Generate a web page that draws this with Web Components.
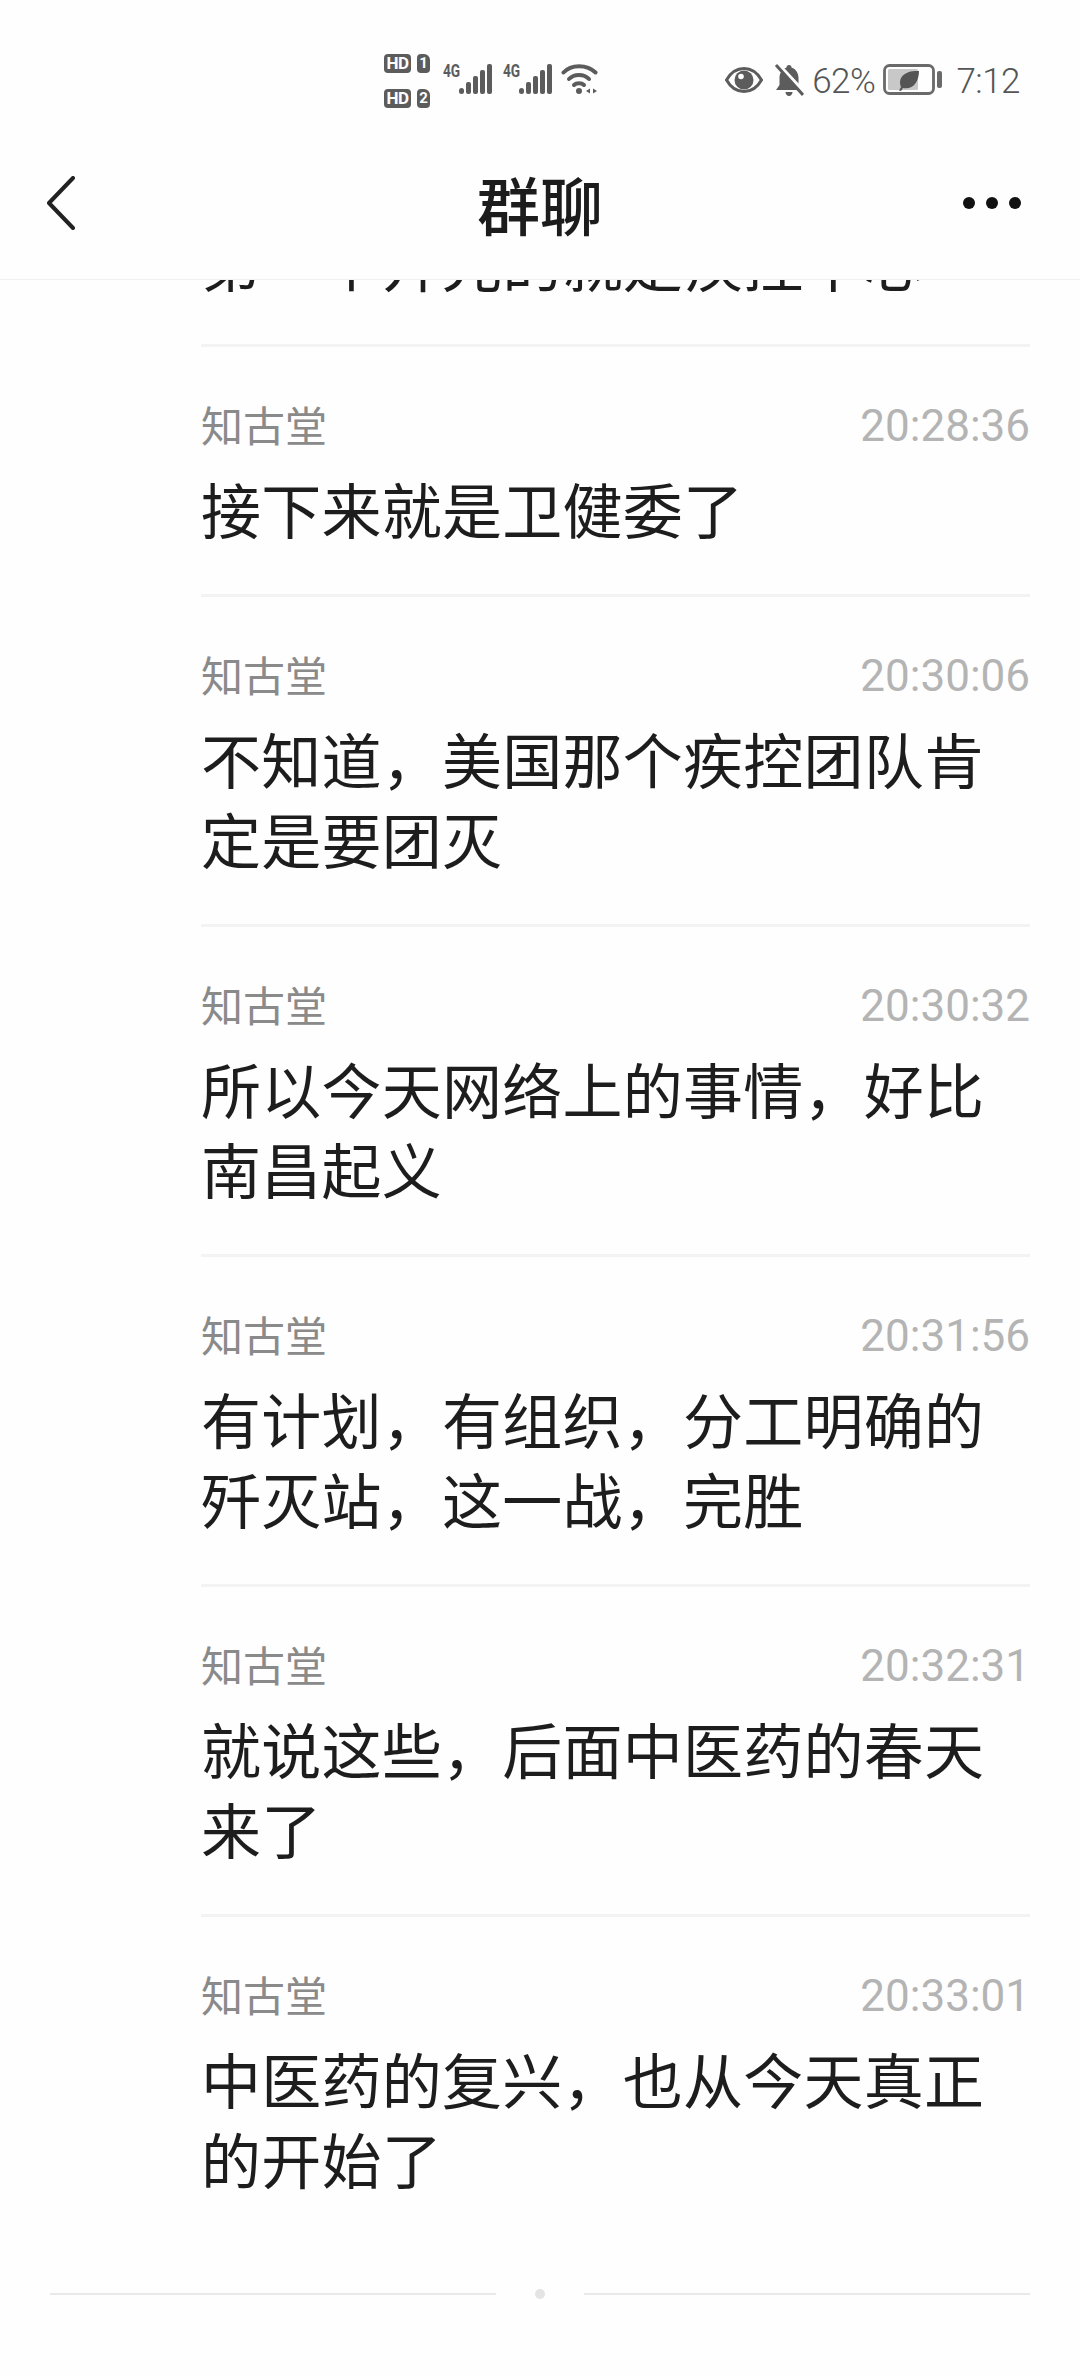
<!DOCTYPE html>
<html lang="zh-CN">
<head>
<meta charset="utf-8">
<title>群聊</title>
<style>
  html, body { margin: 0; padding: 0; background: #fefefe; }
  body { font-family: "Noto Sans CJK SC", "Noto Sans", sans-serif; }
</style>
</head>
<body>
<chat-page>
  <status-bar slot="top"></status-bar>
  <title-bar slot="top" title="群聊"></title-bar>
  <chat-row clipped>第一个开光的就是疾控中心</chat-row>
  <chat-row name="知古堂" time="20:28:36">接下来就是卫健委了</chat-row>
  <chat-row name="知古堂" time="20:30:06">不知道，美国那个疾控团队肯定是要团灭</chat-row>
  <chat-row name="知古堂" time="20:30:32">所以今天网络上的事情，好比南昌起义</chat-row>
  <chat-row name="知古堂" time="20:31:56">有计划，有组织，分工明确的歼灭站，这一战，完胜</chat-row>
  <chat-row name="知古堂" time="20:32:31">就说这些，后面中医药的春天来了</chat-row>
  <chat-row name="知古堂" time="20:33:01" last>中医药的复兴，也从今天真正的开始了</chat-row>
  <end-mark slot="bottom"></end-mark>
</chat-page>

<script>
class ChatPage extends HTMLElement {
  constructor() {
    super();
    this.attachShadow({ mode: 'open' });
    this.shadowRoot.innerHTML = `
      <style>
        :host { display: flex; flex-direction: column; width: 1080px; height: 2376px; overflow: hidden; background: #fefefe; }
        header { flex: none; background: #fefefe; border-bottom: 1px solid #f1f1f1; }
        main { flex: none; height: 2009px; overflow: hidden; display: flex; flex-direction: column; }
        footer { flex: none; }
      </style>
      <header><slot name="top"></slot></header>
      <main><slot></slot></main>
      <footer><slot name="bottom"></slot></footer>
    `;
  }
}

class StatusBar extends HTMLElement {
  constructor() {
    super();
    this.attachShadow({ mode: 'open' });
    const signal = `
      <span class="net"><b>4G</b>
        <svg width="33" height="31" viewBox="0 0 33 31" fill="#5c5c5c">
          <rect x="0" y="25" width="5" height="6" rx="2.5"/>
          <rect x="7" y="19" width="5" height="12" rx="2"/>
          <rect x="14" y="13" width="5" height="18" rx="2"/>
          <rect x="21" y="7" width="5" height="24" rx="2"/>
          <rect x="28" y="1" width="5" height="30" rx="2"/>
        </svg>
      </span>`;
    this.shadowRoot.innerHTML = `
      <style>
        :host { display: flex; height: 134px; box-sizing: border-box; padding: 53px 60px 0 384px; color: #5f5f5f; font-family: Roboto, "Noto Sans", sans-serif; }
        .sims { display: flex; flex-direction: column; gap: 16px; width: 59px; flex: none; margin-top: 1px; }
        .sim { display: flex; gap: 6px; height: 19px; }
        .sim span { background: #5c5c5c; color: #fefefe; border-radius: 4px; font: 700 17px/19px Roboto, sans-serif; text-align: center; }
        .sim .hd { width: 27px; letter-spacing: -.5px; }
        .sim .n { width: 13px; font-size: 15px; border-top-right-radius: 6px; }
        .net { display: flex; align-items: flex-start; margin-top: 10px; flex: none; height: 31px; }
        .net b { font: 700 19px/15px Roboto, sans-serif; color: #5c5c5c; transform: scaleX(.72); transform-origin: left; width: 16px; white-space: nowrap; }
        .nets { display: flex; gap: 11px; flex: none; }
        .wifi { margin: 10px 0 0 9px; flex: none; }
        .right { display: flex; align-items: flex-start; margin-left: auto; flex: none; }
        .eye { margin-top: 14px; }
        .bell { margin: 11px 0 0 11px; }
        .pct, .clock { font-weight: 300; font-size: 35px; line-height: 41px; margin-top: 8px; letter-spacing: -.5px; white-space: nowrap; color: #555; }
        .pct { margin-left: 8px; }
        .batt { margin: 11px 0 0 8px; }
        .clock { margin-left: 14px; }
      </style>
      <div class="sims">
        <div class="sim"><span class="hd">HD</span><span class="n">1</span></div>
        <div class="sim"><span class="hd">HD</span><span class="n">2</span></div>
      </div>
      <div class="nets">${signal}${signal}</div>
      <svg class="wifi" width="37" height="32" viewBox="0 0 37 32" fill="none" stroke="#5c5c5c" stroke-width="4" stroke-linecap="round">
        <path d="M2.500 9.500C10 1 26 1 34.500 9.500"/>
        <path d="M8 16C13 10.500 23 10.500 28 16"/>
        <path d="M13 22C15.500 19.500 20.500 19.500 23 22"/>
        <circle cx="18" cy="28" r="3" fill="#5c5c5c" stroke="none"/>
        <path d="M29 25.500v5l-4-2.500ZM32 25.500v5l4-2.500Z" fill="#5c5c5c" stroke="none"/>
      </svg>
      <div class="right">
        <svg class="eye" width="38" height="26" viewBox="0 0 38 26">
          <path d="M1.500 13C6 5 12 1.500 19 1.500S32 5 36.500 13C32 21 26 24.500 19 24.500S6 21 1.500 13Z" fill="none" stroke="#5c5c5c" stroke-width="3"/>
          <circle cx="19" cy="13" r="9.500" fill="#5c5c5c"/>
          <circle cx="16" cy="9.500" r="2.800" fill="#fefefe"/>
        </svg>
        <svg class="bell" width="30" height="33" viewBox="0 0 30 33" fill="#5c5c5c">
          <path d="M15 1c1.500 0 2.500 1 2.500 2.500C22 5 24.500 9 24.500 14v7l3.500 5H2l3.500-5v-7C5.500 9 8 5 12.500 3.500 12.500 2 13.500 1 15 1Z"/>
          <path d="M11.500 28h7c0 2-1.500 4-3.500 4s-3.500-2-3.500-4Z"/>
          <path d="M5 1 31 29" stroke="#fefefe" stroke-width="3.500"/>
          <path d="M2 1 29 31" stroke="#5c5c5c" stroke-width="3"/>
        </svg>
        <span class="pct">62%</span>
        <svg class="batt" width="59" height="31" viewBox="0 0 59 31">
          <rect x="1.500" y="1.500" width="49" height="28" rx="5" fill="#fefefe" stroke="#6a6a6a" stroke-width="2.800"/>
          <rect x="5" y="5" width="30" height="21" rx="1.500" fill="#c8c8c8"/>
          <path d="M36 7C24 6 14 12 18 23L16 26.500 18 27 20 24C30 26 36 18 36 7Z" fill="#555"/>
          <rect x="54" y="7" width="5" height="17" rx="2" fill="#6a6a6a"/>
        </svg>
        <span class="clock">7:12</span>
      </div>
    `;
  }
}

class TitleBar extends HTMLElement {
  constructor() {
    super();
    this.attachShadow({ mode: 'open' });
    this.shadowRoot.innerHTML = `
      <style>
        :host { display: grid; grid-template-columns: 1fr auto 1fr; align-items: center; height: 145px; box-sizing: border-box; padding: 0 47px 8px; color: #1c1c1c; }
        h1 { margin: 0; font: 500 63px/80px "Noto Sans CJK SC", sans-serif; }
        .more { justify-self: end; display: flex; gap: 11px; margin-right: 12px; }
        .more i { width: 12px; height: 12px; border-radius: 50%; background: #111; }
        svg { display: block; }
      </style>
      <svg width="28" height="54" viewBox="0 0 28 54" fill="none" stroke="#222" stroke-width="4" stroke-linecap="round" stroke-linejoin="round">
        <path d="M26 2 2 27 26 52"/>
      </svg>
      <h1></h1>
      <div class="more"><i></i><i></i><i></i></div>
    `;
    this.shadowRoot.querySelector('h1').textContent = this.getAttribute('title');
  }
}

class ChatRow extends HTMLElement {
  constructor() {
    super();
    this.attachShadow({ mode: 'open' });
    this.shadowRoot.innerHTML = `
      <style>
        :host { display: block; flex: none; margin: 0 50px 0 201px; padding: 47px 0 46px; border-bottom: 3px solid #f3f3f3; }
        :host([clipped]) { margin-top: -59px; padding: 0 0 43px; }
        :host([clipped]) .meta { display: none; }
        :host([clipped]) .body { margin-top: 0; }
        :host([last]) { border-bottom: 0; }
        .meta { display: flex; justify-content: space-between; align-items: center; height: 60px; font-size: 42px; line-height: 60px; }
        .name { color: #8a8a8a; }
        .time { color: #b4b4b4; font-family: Roboto, sans-serif; font-weight: 400; font-size: 44px; padding-top: 4px; }
        .body { margin-top: 14px; color: #1d1d1d; font-size: 60px; line-height: 80px; letter-spacing: .25px; }
      </style>
      <div class="meta"><span class="name"></span><span class="time"></span></div>
      <div class="body"><slot></slot></div>
    `;
    this.shadowRoot.querySelector('.name').textContent = this.getAttribute('name');
    this.shadowRoot.querySelector('.time').textContent = this.getAttribute('time');
  }
}

class EndMark extends HTMLElement {
  constructor() {
    super();
    this.attachShadow({ mode: 'open' });
    this.shadowRoot.innerHTML = `
      <style>
        :host { display: flex; align-items: center; height: 10px; margin: 0 50px; }
        hr { flex: 1; margin: 0; border: 0; height: 2px; background: #e9e9e9; }
        i { width: 10px; height: 10px; border-radius: 50%; background: #e4e4e4; margin: 0 39px; }
      </style>
      <hr><i></i><hr>
    `;
  }
}

customElements.define('chat-page', ChatPage);
customElements.define('status-bar', StatusBar);
customElements.define('title-bar', TitleBar);
customElements.define('chat-row', ChatRow);
customElements.define('end-mark', EndMark);
</script>
</body>
</html>
